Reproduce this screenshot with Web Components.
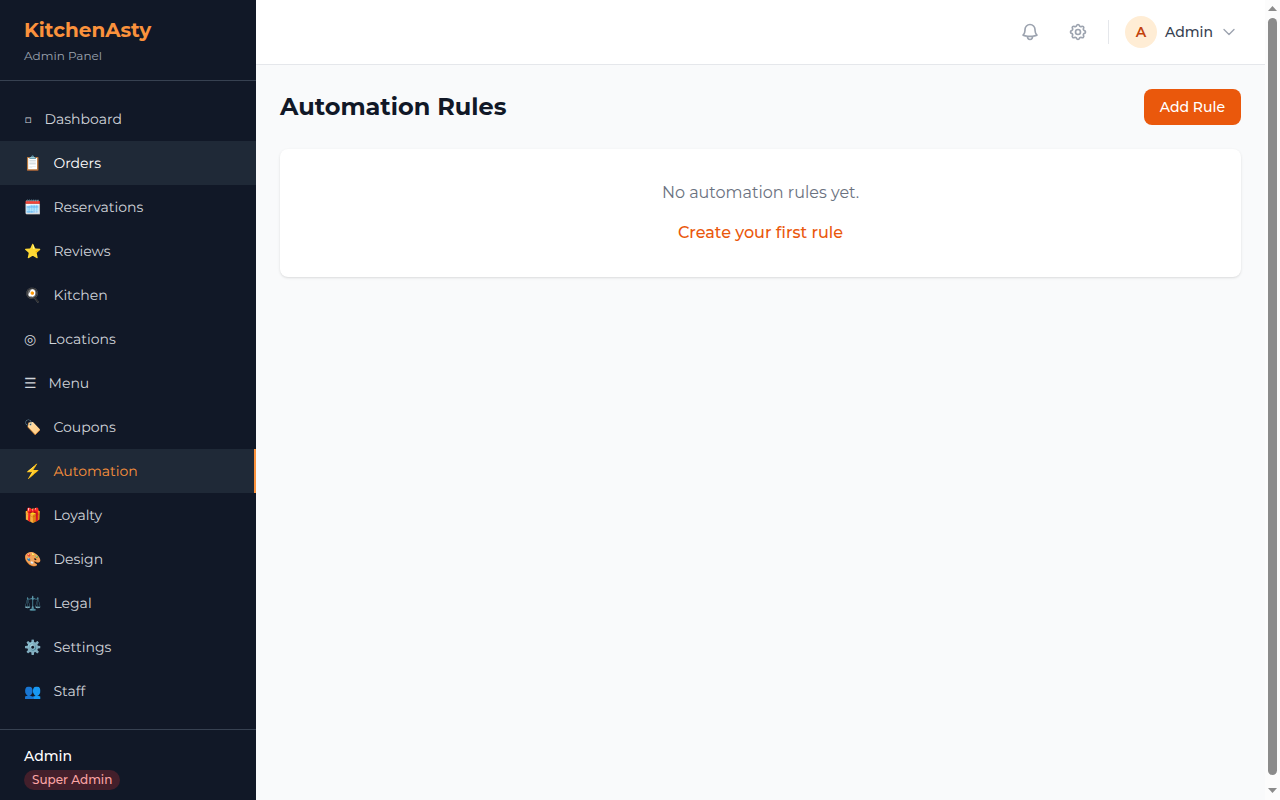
<!DOCTYPE html>
<html lang="en">
<head>
<meta charset="utf-8">
<meta name="viewport" content="width=device-width, initial-scale=1">
<title>KitchenAsty - Automation Rules</title>
<style>
    body {
        margin: 0;
        font-family: Montserrat, Inter, sans-serif;
        font-size: 14px;
        line-height: 20px;
        color: #111827;
        background: #f9fafb;
    }
</style>
</head>
<body>
<app-shell>
    <side-bar slot="sidebar" brand="KitchenAsty" caption="Admin Panel">
        <nav-item icon="□">Dashboard</nav-item>
        <nav-item icon="📋" hovered>Orders</nav-item>
        <nav-item icon="🗓️">Reservations</nav-item>
        <nav-item icon="⭐">Reviews</nav-item>
        <nav-item icon="🍳">Kitchen</nav-item>
        <nav-item icon="◎">Locations</nav-item>
        <nav-item icon="☰">Menu</nav-item>
        <nav-item icon="🏷️">Coupons</nav-item>
        <nav-item icon="⚡" active>Automation</nav-item>
        <nav-item icon="🎁">Loyalty</nav-item>
        <nav-item icon="🎨">Design</nav-item>
        <nav-item icon="⚖️">Legal</nav-item>
        <nav-item icon="⚙️">Settings</nav-item>
        <nav-item icon="👥">Staff</nav-item>
        <user-summary slot="footer" name="Admin" role-name="Super Admin"></user-summary>
    </side-bar>
    <top-bar slot="header" user="Admin"></top-bar>
    <page-header heading="Automation Rules">
        <action-button>Add Rule</action-button>
    </page-header>
    <empty-card message="No automation rules yet.">
        <action-button variant="link">Create your first rule</action-button>
    </empty-card>
    <scroll-rail slot="rail"></scroll-rail>
</app-shell>

<script>
class AppShell extends HTMLElement {
    constructor() {
        super();
        this.attachShadow({ mode: "open" });

        let style = `
        <style>
        :host {
            display: flex;
            height: 100vh;
            overflow: hidden;
        }

        .column {
            flex: 1;
            min-width: 0;
        }

        main {
            padding: 24px;
        }
        </style>
        `;

        let html = `
        <slot name="sidebar"></slot>
        <div class="column">
            <slot name="header"></slot>
            <main><slot></slot></main>
        </div>
        <slot name="rail"></slot>
        `;

        this.shadowRoot.innerHTML = style + html;
    }
}

class SideBar extends HTMLElement {
    constructor() {
        super();
        this.attachShadow({ mode: "open" });

        let style = `
        <style>
        :host {
            display: flex;
            flex-direction: column;
            flex: none;
            width: 256px;
            min-height: 100vh;
            align-self: flex-start;
            background: #111827;
            color: #d1d5db;
        }

        header {
            padding: 16px 24px;
            border-bottom: 1px solid #374151;
        }

        .brand {
            font-size: 20px;
            line-height: 28px;
            font-weight: 700;
            color: #fb923c;
        }

        .caption {
            margin-top: 4px;
            font-size: 12px;
            line-height: 16px;
            color: #9ca3af;
        }

        nav {
            flex: 1;
            padding: 16px 0;
        }

        footer {
            padding: 16px 24px;
            border-top: 1px solid #374151;
        }
        </style>
        `;

        let html = `
        <header>
            <div class="brand">${this.getAttribute("brand")}</div>
            <div class="caption">${this.getAttribute("caption")}</div>
        </header>
        <nav><slot></slot></nav>
        <footer><slot name="footer"></slot></footer>
        `;

        this.shadowRoot.innerHTML = style + html;
    }
}

class NavItem extends HTMLElement {
    constructor() {
        super();
        this.attachShadow({ mode: "open" });

        let style = `
        <style>
        :host {
            display: block;
            text-rendering: geometricPrecision;
        }

        a {
            display: flex;
            gap: 12px;
            padding: 12px 24px;
            color: #d1d5db;
            text-decoration: none;
        }

        .icon {
            font-family: Montserrat, "Liberation Sans", "Noto Color Emoji", "DejaVu Sans", sans-serif;
        }

        a:hover,
        :host([hovered]) a {
            background: #1f2937;
            color: #ffffff;
        }

        :host([active]) a {
            background: #1f2937;
            color: #fb923c;
            border-right: 2px solid #fb923c;
        }
        </style>
        `;

        let html = `<a href="#"><span class="icon" aria-hidden="true">${this.getAttribute("icon")}</span><span><slot></slot></span></a>`;

        this.shadowRoot.innerHTML = style + html;
    }
}

class UserSummary extends HTMLElement {
    constructor() {
        super();
        this.attachShadow({ mode: "open" });

        let style = `
        <style>
        :host {
            display: flex;
            flex-direction: column;
            align-items: flex-start;
            gap: 4px;
            font-weight: 500;
        }

        .name {
            color: #ffffff;
        }

        .role {
            padding: 2px 8px;
            border-radius: 10px;
            font-size: 12px;
            line-height: 16px;
            background: #431f2b;
            color: #fca5a5;
        }
        </style>
        `;

        let html = `
        <span class="name">${this.getAttribute("name")}</span>
        <span class="role">${this.getAttribute("role-name")}</span>
        `;

        this.shadowRoot.innerHTML = style + html;
    }
}

class TopBar extends HTMLElement {
    constructor() {
        super();
        this.attachShadow({ mode: "open" });

        let style = `
        <style>
        :host {
            display: flex;
            justify-content: flex-end;
            align-items: center;
            gap: 12px;
            height: 64px;
            padding: 0 24px;
            background: #ffffff;
            border-bottom: 1px solid #e5e7eb;
        }

        button {
            display: flex;
            align-items: center;
            padding: 0;
            border: none;
            background: none;
            font: inherit;
            color: #9ca3af;
            cursor: pointer;
        }

        .icon {
            padding: 8px;
        }

        svg {
            display: block;
            fill: none;
            stroke: currentColor;
            stroke-width: 2;
            stroke-linecap: round;
            stroke-linejoin: round;
        }

        .divider {
            width: 1px;
            height: 24px;
            background: #e5e7eb;
        }

        .user {
            gap: 8px;
            padding: 0 4px;
            font-weight: 500;
            color: #374151;
        }

        .avatar {
            width: 32px;
            line-height: 32px;
            border-radius: 50%;
            text-align: center;
            font-weight: 600;
            background: #ffedd5;
            color: #c2410c;
        }

        .user svg {
            color: #9ca3af;
        }
        </style>
        `;

        let user = this.getAttribute("user");
        let html = `
        <button class="icon" aria-label="Notifications">
            <svg width="20" height="20" viewBox="0 0 24 24"><path d="M14.857 17.082a23.848 23.848 0 0 0 5.454-1.31A8.967 8.967 0 0 1 18 9.75V9A6 6 0 0 0 6 9v.75a8.967 8.967 0 0 1-2.312 6.022c1.733.64 3.56 1.085 5.455 1.31m5.714 0a24.255 24.255 0 0 1-5.714 0m5.714 0a3 3 0 1 1-5.714 0"/></svg>
        </button>
        <button class="icon" aria-label="Settings">
            <svg width="20" height="20" viewBox="0 0 24 24"><path d="M10.325 4.317c.426-1.756 2.924-1.756 3.35 0a1.724 1.724 0 0 0 2.573 1.066c1.543-.94 3.31.826 2.37 2.37a1.724 1.724 0 0 0 1.065 2.572c1.756.426 1.756 2.924 0 3.35a1.724 1.724 0 0 0-1.066 2.573c.94 1.543-.826 3.31-2.37 2.37a1.724 1.724 0 0 0-2.572 1.065c-.426 1.756-2.924 1.756-3.35 0a1.724 1.724 0 0 0-2.573-1.066c-1.543.94-3.31-.826-2.37-2.37a1.724 1.724 0 0 0-1.065-2.572c-1.756-.426-1.756-2.924 0-3.35a1.724 1.724 0 0 0 1.066-2.573c-.94-1.543.826-3.31 2.37-2.37.996.608 2.296.07 2.572-1.065Z"/><path d="M15 12a3 3 0 1 1-6 0 3 3 0 0 1 6 0Z"/></svg>
        </button>
        <span class="divider"></span>
        <button class="user">
            <span class="avatar">${user[0]}</span>
            <span>${user}</span>
            <svg width="16" height="16" viewBox="0 0 24 24"><path d="m19.5 8.25-7.5 7.5-7.5-7.5"/></svg>
        </button>
        `;

        this.shadowRoot.innerHTML = style + html;
    }
}

class PageHeader extends HTMLElement {
    constructor() {
        super();
        this.attachShadow({ mode: "open" });

        let style = `
        <style>
        :host {
            display: flex;
            justify-content: space-between;
            align-items: center;
            margin-bottom: 24px;
        }

        h1 {
            margin: 0;
            font-size: 24px;
            line-height: 32px;
            font-weight: 700;
        }
        </style>
        `;

        let html = `<h1>${this.getAttribute("heading")}</h1><slot></slot>`;

        this.shadowRoot.innerHTML = style + html;
    }
}

class ActionButton extends HTMLElement {
    constructor() {
        super();
        this.attachShadow({ mode: "open" });

        let style = `
        <style>
        :host {
            display: block;
        }

        button {
            padding: 8px 16px;
            border: none;
            border-radius: 8px;
            background: #ea580c;
            color: #ffffff;
            font: inherit;
            font-weight: 500;
            cursor: pointer;
        }

        :host([variant="link"]) button {
            padding: 0;
            background: none;
            color: #ea580c;
        }
        </style>
        `;

        let html = "<button><slot></slot></button>";

        this.shadowRoot.innerHTML = style + html;
    }
}

class EmptyCard extends HTMLElement {
    constructor() {
        super();
        this.attachShadow({ mode: "open" });

        let style = `
        <style>
        :host {
            display: flex;
            flex-direction: column;
            align-items: center;
            gap: 16px;
            padding: 32px;
            border-radius: 8px;
            background: #ffffff;
            box-shadow: 0 1px 3px rgba(0, 0, 0, 0.1), 0 1px 2px -1px rgba(0, 0, 0, 0.1);
            font-size: 16px;
            line-height: 24px;
        }

        p {
            margin: 0;
            color: #6b7280;
        }
        </style>
        `;

        let html = `<p>${this.getAttribute("message")}</p><slot></slot>`;

        this.shadowRoot.innerHTML = style + html;
    }
}

class ScrollRail extends HTMLElement {
    constructor() {
        super();
        this.attachShadow({ mode: "open" });

        let style = `
        <style>
        :host {
            display: flex;
            flex-direction: column;
            align-items: center;
            gap: 6px;
            flex: none;
            box-sizing: border-box;
            width: 15px;
            height: 100vh;
            padding: 6px 0;
            background: #fcfcfc;
        }

        svg {
            display: block;
            fill: #8b8b8b;
        }

        .thumb {
            flex: 1;
            width: 9px;
            margin-bottom: 7px;
            border-radius: 5px;
            background: #8b8b8b;
        }
        </style>
        `;

        let html = `
        <svg width="9" height="6" viewBox="0 0 9 6"><path d="M0 5 4.5 0 9 5Z"/></svg>
        <div class="thumb"></div>
        <svg width="9" height="6" viewBox="0 0 9 6"><path d="M0 0h9L4.5 5Z"/></svg>
        `;

        this.shadowRoot.innerHTML = style + html;
    }
}

customElements.define("app-shell", AppShell);
customElements.define("side-bar", SideBar);
customElements.define("nav-item", NavItem);
customElements.define("user-summary", UserSummary);
customElements.define("top-bar", TopBar);
customElements.define("page-header", PageHeader);
customElements.define("action-button", ActionButton);
customElements.define("empty-card", EmptyCard);
customElements.define("scroll-rail", ScrollRail);
</script>
</body>
</html>
